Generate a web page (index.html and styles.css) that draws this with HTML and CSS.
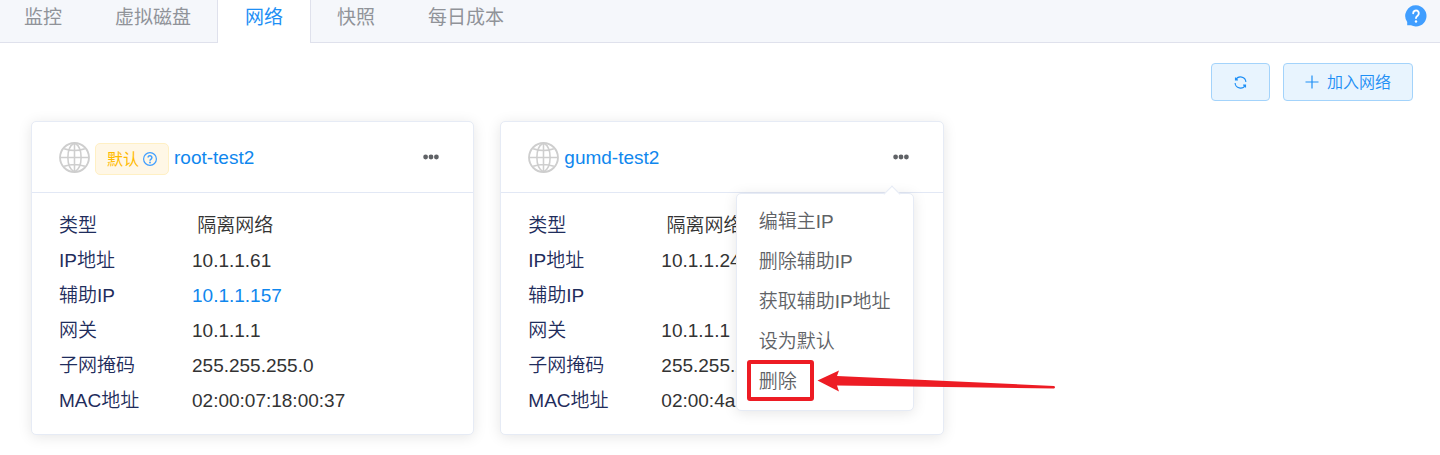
FILE: index.html
```html
<!DOCTYPE html>
<html lang="zh-CN">
<head>
<meta charset="utf-8">
<title>网络</title>
<link rel="stylesheet" href="styles.css">
</head>
<body>
<svg class="defs" aria-hidden="true">
  <symbol id="globe" viewBox="0 0 30 30">
    <g fill="none" stroke="#cecece" stroke-width="1.500">
      <circle cx="15" cy="15" r="14" stroke-width="1.800"/>
      <path d="M15 1v28M1 15h28M5 6.500q10 3.500 20 0M5 23.500q10-3.500 20 0"/>
      <path d="M15 1C11 3 8.600 8 8.600 15S11 27 15 29C19 27 21.400 22 21.400 15S19 3 15 1z"/>
    </g>
  </symbol>
  <symbol id="dots" viewBox="0 0 16 6">
    <g fill="#606266"><circle cx="2.600" cy="3" r="2.400"/><circle cx="8" cy="3" r="2.400"/><circle cx="13.400" cy="3" r="2.400"/></g>
  </symbol>
</svg>

<header class="topbar">
  <nav class="tabs">
    <a class="tab" href="#monitor">监控</a>
    <a class="tab" href="#disk">虚拟磁盘</a>
    <a class="tab tab-active" href="#network" aria-current="page">网络</a>
    <a class="tab" href="#snapshot">快照</a>
    <a class="tab" href="#cost">每日成本</a>
  </nav>
  <button class="help" type="button" aria-label="帮助">
    <svg width="22" height="22" viewBox="0 0 22 22"><path d="M11 .3A10.600 10.600 0 1 1 6 20.300H2.200V17A10.600 10.600 0 0 1 11 .3z" fill="#409eff"/><path d="M8.200 8.200a2.800 2.800 0 1 1 4.600 2.200c-1.200.9-1.800 1.400-1.800 2.700" fill="none" stroke="#fff" stroke-width="1.900" stroke-linecap="round"/><circle cx="11" cy="16.500" r="1.200" fill="#fff"/></svg>
  </button>
</header>

<main class="content">
  <div class="toolbar">
    <button class="btn btn-icon" type="button" aria-label="刷新">
      <svg width="13" height="13" viewBox="0 0 14 14" fill="none" stroke="#1e8ff5" stroke-width="1.200"><path d="M1.600 1.600v2.600h2.600M1.900 4.100A5.800 5.800 0 0 1 12.800 6.500M12.400 12.400v-2.600h-2.600M12.100 9.900A5.800 5.800 0 0 1 1.200 7.500"/></svg>
    </button>
    <button class="btn" type="button">
      <svg width="14" height="14" viewBox="0 0 14 14" stroke="#1e8ff5" stroke-width="1.200"><path d="M7 .5v13M.5 7h13"/></svg>
      <span>加入网络</span>
    </button>
  </div>

  <div class="cards">
    <section class="card">
      <div class="card-head">
        <svg class="globe"><use href="#globe"/></svg>
        <span class="tag">默认
          <svg width="14" height="14" viewBox="0 0 14 14" fill="none" stroke="#409eff"><circle cx="7" cy="7" r="6.400" stroke-width="1.200"/><path d="M5.100 5.600a1.900 1.900 0 1 1 3 1.500C7.400 7.600 7 7.900 7 8.800" stroke-width="1.500"/><circle cx="7" cy="10.500" r=".9" fill="#409eff" stroke="none"/></svg>
        </span>
        <a class="link" href="#root-test2">root-test2</a>
        <div class="more">
          <button class="more-btn" type="button" aria-label="更多"><svg class="dots"><use href="#dots"/></svg></button>
        </div>
      </div>
      <dl class="props">
        <dt>类型</dt><dd>&nbsp;隔离网络</dd>
        <dt>IP地址</dt><dd>10.1.1.61</dd>
        <dt>辅助IP</dt><dd><a class="link" href="#ip">10.1.1.157</a></dd>
        <dt>网关</dt><dd>10.1.1.1</dd>
        <dt>子网掩码</dt><dd>255.255.255.0</dd>
        <dt>MAC地址</dt><dd>02:00:07:18:00:37</dd>
      </dl>
    </section>

    <section class="card">
      <div class="card-head">
        <svg class="globe"><use href="#globe"/></svg>
        <a class="link" href="#gumd-test2">gumd-test2</a>
        <div class="more">
          <button class="more-btn" type="button" aria-label="更多" aria-expanded="true"><svg class="dots"><use href="#dots"/></svg></button>
          <div class="menu">
            <button class="menu-item" type="button">编辑主IP</button>
            <button class="menu-item" type="button">删除辅助IP</button>
            <button class="menu-item" type="button">获取辅助IP地址</button>
            <button class="menu-item" type="button">设为默认</button>
            <button class="menu-item" type="button">删除</button>
            <svg class="callout" width="312" height="44" viewBox="0 0 312 44" aria-hidden="true"><rect x="3" y="3" width="63" height="37" rx="1" fill="none" stroke="#ed1c24" stroke-width="4"/><path d="M71.500 21.500L93 11.500L91 17L308 27Q310 28.200 308 29.500L91 26.500L93 32.500z" fill="#ed1c24"/></svg>
          </div>
        </div>
      </div>
      <dl class="props">
        <dt>类型</dt><dd>&nbsp;隔离网络</dd>
        <dt>IP地址</dt><dd>10.1.1.24</dd>
        <dt>辅助IP</dt><dd></dd>
        <dt>网关</dt><dd>10.1.1.1</dd>
        <dt>子网掩码</dt><dd>255.255.2</dd>
        <dt>MAC地址</dt><dd>02:00:4a:</dd>
      </dl>
    </section>
  </div>
</main>
</body>
</html>
```

FILE: styles.css
```css
* {
  box-sizing: border-box;
}

body {
  margin: 0;
  background: #fff;
  color: #333;
  font: 350 19px/35px "Liberation Sans", "Noto Sans CJK SC", sans-serif;
}

button {
  margin: 0;
  padding: 0;
  border: 0;
  background: none;
  font: inherit;
  color: inherit;
  cursor: pointer;
}

svg {
  display: block;
  flex: none;
}

a {
  text-decoration: none;
}

.defs {
  position: absolute;
  width: 0;
  height: 0;
}

.link {
  color: #0f87ee;
}

/* Tabs */
.topbar {
  display: flex;
  justify-content: space-between;
  align-items: flex-start;
  padding-right: 13px;
  background: #f5f7fb;
  box-shadow: inset 0 -1px #dfe1ec;
}

.tabs {
  display: flex;
}

.tab {
  padding: 0 26px 8px;
  border: solid transparent;
  border-width: 0 1px;
  margin-left: -1px;
  color: #909399;
  font-weight: 400;
}

.tab:first-child {
  margin-left: 0;
  padding-left: 23px;
}

.tab-active {
  padding: 0 27px 8px;
  border-color: #dfe1ec;
  background: #fff;
  color: #1e8ff5;
}

.help {
  padding-top: 5px;
}

/* Toolbar */
.content {
  padding: 20px 27px 20px 31px;
}

.toolbar {
  display: flex;
  justify-content: flex-end;
  gap: 13px;
  margin-bottom: 20px;
}

.btn {
  display: flex;
  align-items: center;
  gap: 8px;
  height: 38px;
  padding: 0 21px;
  border: 1px solid #a3d3fb;
  border-radius: 4px;
  background: #e8f4fe;
  color: #1e8ff5;
  font-size: 16px;
}

.btn-icon {
  padding: 0 22px;
}

/* Network cards */
.cards {
  display: grid;
  grid-template-columns: repeat(3, 1fr);
  gap: 26px;
}

.card {
  border: 1px solid #e6ebf5;
  border-radius: 5px;
  background: #fff;
  box-shadow: 0 2px 14px rgba(0, 0, 0, 0.1);
}

.card-head {
  display: flex;
  align-items: center;
  gap: 5px;
  height: 71px;
  padding: 0 29px 0 27px;
  border-bottom: 1px solid #e2e8f5;
}

.globe {
  width: 31px;
  height: 31px;
}

.tag {
  display: flex;
  align-items: center;
  gap: 4px;
  height: 32px;
  margin-top: 4px;
  padding: 0 11px;
  border: 1px solid #fff0c4;
  border-radius: 5px;
  background: #fff7e6;
  color: #ffba00;
  font-size: 16px;
  font-weight: 400;
}

.more {
  position: relative;
  align-self: stretch;
  display: flex;
  margin-left: auto;
}

.more-btn {
  display: grid;
  place-items: center;
  width: 26px;
}

.dots {
  width: 16px;
  height: 6px;
}

.props {
  display: grid;
  grid-template-columns: 133px 1fr;
  margin: 0;
  padding: 15px 27px 16px;
}

.props dt {
  color: #1f2d5c;
}

.props dd {
  margin: 0;
}

/* Drop-down menu */
.menu {
  position: absolute;
  z-index: 1;
  top: calc(100% + 1px);
  right: 0;
  width: 178px;
  padding: 8px 0;
  border: 1px solid #e6ebf5;
  border-radius: 5px;
  background: #fff;
  box-shadow: 0 2px 14px rgba(0, 0, 0, 0.1);
}

.menu::before {
  content: "";
  position: absolute;
  top: -6px;
  right: 15px;
  width: 11px;
  height: 11px;
  border: solid #e6ebf5;
  border-width: 1px 0 0 1px;
  background: #fff;
  transform: rotate(45deg);
}

.menu-item {
  display: block;
  width: 100%;
  padding: 0 22px;
  color: #606266;
  line-height: 40px;
  text-align: left;
  white-space: nowrap;
}

.callout {
  position: absolute;
  bottom: 7px;
  left: 9px;
  pointer-events: none;
}
```
